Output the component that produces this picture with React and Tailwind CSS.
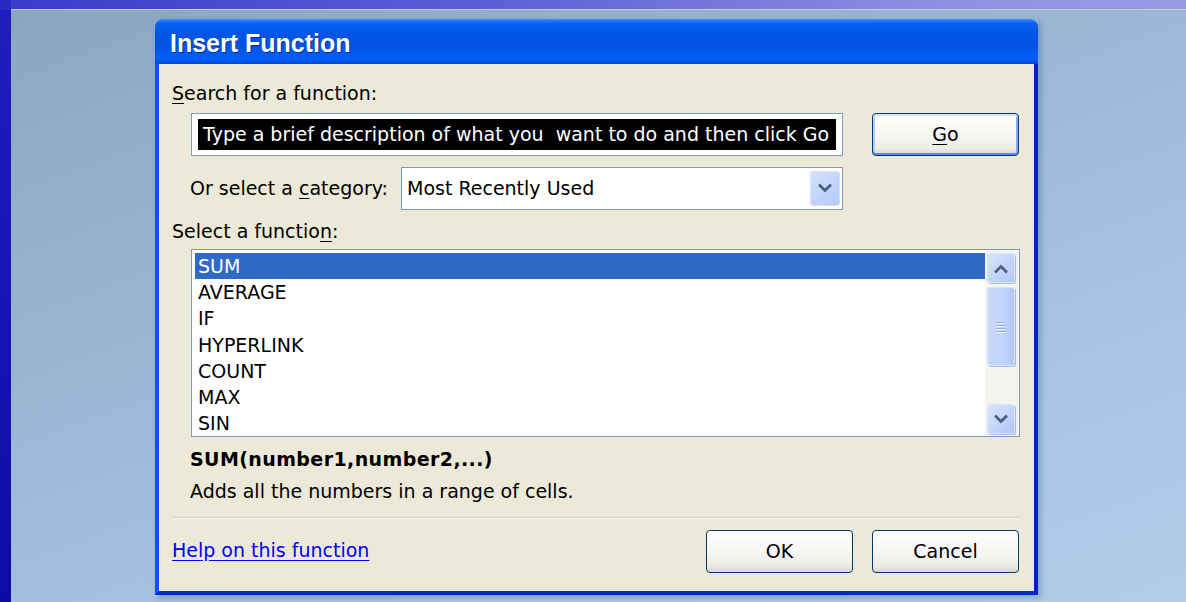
import React from 'react';

const functions = ['SUM', 'AVERAGE', 'IF', 'HYPERLINK', 'COUNT', 'MAX', 'SIN'];

// small chevron used by the combo box and the scroll arrows
const Chevron = ({ up = false }) => (
    <svg width="14" height="9" viewBox="0 0 14 9" fill="none">
        <polyline
            points={up ? '2,7.5 7,2.5 12,7.5' : '2,1.5 7,6.5 12,1.5'}
            stroke="#4d6185"
            strokeWidth="2.8"
            strokeLinecap="square"
        />
    </svg>
);

const XpButton = ({ children, isDefault = false }) => (
    <button
        className={
            'w-[147px] h-[43px] rounded-[4px] border border-[#003c74] text-[19px] text-black ' +
            'bg-[linear-gradient(to_bottom,#ffffff_0%,#f6f5f0_55%,#ecebe4_85%,#d9d6ca_100%)] ' +
            (isDefault
                ? 'shadow-[inset_0_2px_0_#cee7ff,inset_0_-2px_0_#6982ee,inset_2px_0_0_#b2cbf7,inset_-2px_0_0_#8aa6ee]'
                : 'shadow-[inset_0_1px_0_#ffffff]')
        }
    >
        {children}
    </button>
);

const ScrollArrow = ({ up }) => (
    <div className="w-[28px] h-[30px] rounded-[3px] border border-[#dbe5fc] bg-[linear-gradient(135deg,#dce6fd_0%,#c5d6fb_50%,#b2c7f4_100%)] shadow-[1px_1px_0_#a7bde9] flex items-center justify-center">
        <Chevron up={up} />
    </div>
);

const Dialog = () => (
    <div className="w-[883px] h-[576px] flex flex-col shadow-[3px_3px_6px_rgba(20,40,90,0.25)]">
        {/* caption */}
        <div className="h-[45px] shrink-0 rounded-t-[8px] bg-[linear-gradient(to_bottom,#3d8fff_0%,#0b62f2_9%,#0156e6_30%,#0053e2_60%,#0160f6_88%,#0049d6_100%)] flex items-center pl-[15px] pt-[5px]">
            <span className="text-white font-bold text-[25px] font-['Liberation_Sans',sans-serif] [text-shadow:1px_1px_0_#0a2a8c]">
                Insert Function
            </span>
        </div>

        {/* body */}
        <div className="flex-1 bg-[#ece9d8] border-l-4 border-r-4 border-b-4 border-l-[#0d52f0] border-r-[#0320cc] border-b-[#0428cf] pl-[13px] pr-[15px] pt-[17px] text-[19px] text-black">
            <div className="h-[24px] leading-[24px]">
                <span className="underline underline-offset-[3px]">S</span>earch for a function:
            </div>

            <div className="flex mt-[8px] ml-[19px]">
                <div className="w-[652px] h-[43px] border border-[#7f9db9] bg-white px-[6px] py-[5px]">
                    <div className="h-full bg-black text-white pl-[5px] flex items-center whitespace-pre">
                        Type a brief description of what you  want to do and then click Go
                    </div>
                </div>
                <div className="ml-[29px]">
                    <XpButton isDefault>
                        <span className="underline underline-offset-[3px]">G</span>o
                    </XpButton>
                </div>
            </div>

            <div className="flex items-center mt-[11px] ml-[18px] h-[43px]">
                <div className="w-[211px]">
                    Or select a <span className="underline underline-offset-[3px]">c</span>ategory:
                </div>
                <div className="w-[442px] h-[43px] border border-[#7f9db9] bg-white flex items-center pl-[5px] pr-[2px] py-[3px]">
                    <span className="flex-1">Most Recently Used</span>
                    <div className="w-[30px] h-full rounded-[3px] border border-[#d6e1fb] bg-[linear-gradient(135deg,#d6e2fd_0%,#c3d5fb_50%,#b4c9f6_100%)] flex items-center justify-center">
                        <Chevron />
                    </div>
                </div>
            </div>

            <div className="h-[24px] leading-[24px] mt-[9px]">
                Select a functio<span className="underline underline-offset-[3px]">n</span>:
            </div>

            <div className="mt-[6px] ml-[19px] w-[829px] h-[188px] border border-[#7f9db9] bg-white flex">
                <div className="flex-1 pl-[3px] pt-[3px]">
                    {functions.map((fn, i) => (
                        <div
                            key={fn}
                            className={
                                'h-[26.2px] leading-[26px] pl-[3px] ' +
                                (i === 0 ? 'bg-[#316ac5] text-white' : 'text-black')
                            }
                        >
                            {fn}
                        </div>
                    ))}
                </div>
                <div className="w-[34px] bg-[#f4f4ee] pl-[2px] pr-[4px] pt-[3px] pb-[2px] flex flex-col">
                    <ScrollArrow up />
                    <div className="mt-[4px] h-[79px] rounded-[3px] border border-[#dbe5fc] bg-[linear-gradient(to_right,#c9d8fc_0%,#c2d4fa_60%,#b3c8f5_100%)] shadow-[1px_1px_0_#a7bde9] flex flex-col items-center justify-center gap-[2px]">
                        {[0, 1, 2, 3].map((n) => (
                            <div key={n} className="w-[10px] h-[1px] bg-[#8fb0f0] shadow-[0_1px_0_#eef4fe]" />
                        ))}
                    </div>
                    <div className="flex-1" />
                    <ScrollArrow />
                </div>
            </div>

            <div className="h-[24px] leading-[24px] mt-[10px] ml-[18px] font-bold tracking-[0.4px]">
                SUM(number1,number2,...)
            </div>
            <div className="h-[24px] leading-[24px] mt-[8px] ml-[18px]">
                Adds all the numbers in a range of cells.
            </div>

            <div className="mt-[14px] w-[848px] h-[1px] bg-[#d3d0c1] shadow-[0_1px_0_#f7f6f0]" />

            <div className="flex items-center mt-[12px]">
                <a href="#" className="text-[#0000ff] underline underline-offset-[3px] -mt-[2px]">
                    Help on this function
                </a>
                <div className="ml-auto flex gap-[19px]">
                    <XpButton>OK</XpButton>
                    <XpButton>Cancel</XpButton>
                </div>
            </div>
        </div>
    </div>
);

const App = () => {
    return (
        <div className="w-[1186px] h-[602px] overflow-hidden flex flex-col bg-[#a4c2e2] font-['DejaVu_Sans',sans-serif]">
            <div className="flex h-[10px] shrink-0">
                <div className="w-[11px] bg-[#2a2ac2]" />
                <div className="flex-1 bg-[linear-gradient(to_right,#3a3cca_0%,#5c5ed6_40%,#8f90e2_80%,#9a9be6_100%)] border-b border-[#c8cbd6]" />
            </div>
            <div className="flex flex-1">
                <div className="w-[11px] bg-[linear-gradient(to_bottom,#1e1ebe_0%,#1515b2_50%,#0c0ca4_100%)]" />
                <div className="flex-1 bg-[linear-gradient(160deg,#8aa7c2_0%,#9cbad7_45%,#a9c7e5_75%,#b0cdea_100%)] pl-[144px] pt-[9px]">
                    <Dialog />
                </div>
            </div>
        </div>
    );
};

export default App;
